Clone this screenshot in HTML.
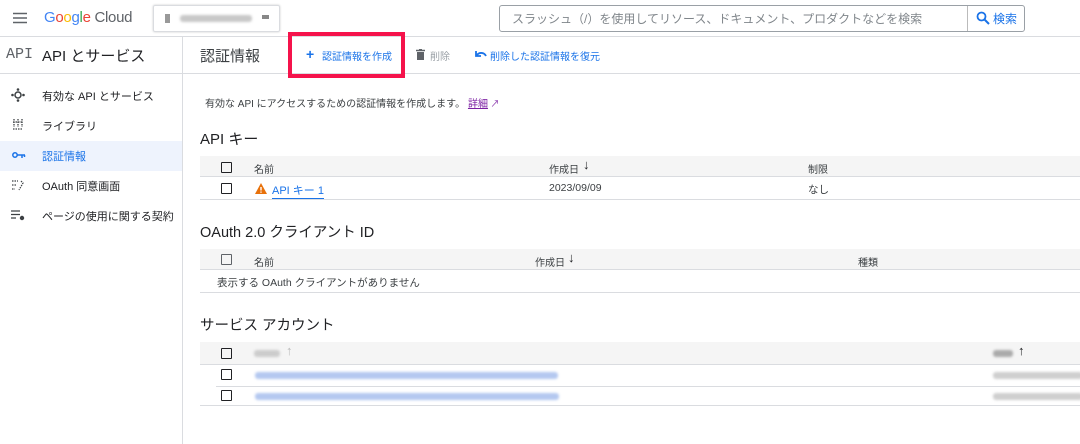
<!DOCTYPE html>
<html><head><meta charset="utf-8"><style>
*{box-sizing:border-box;margin:0;padding:0}
body{width:1080px;height:444px;overflow:hidden;background:#fff;font-family:"Liberation Sans","Noto Sans CJK JP",sans-serif;color:#202124;position:relative}
.a{position:absolute;white-space:nowrap}
.hl{position:absolute;background:#dadce0}
.s{font-size:10px;color:#3c4043}
.blue{color:#1a73e8}
.cb{position:absolute;width:11px;height:11px;border:1.6px solid #202124;border-radius:1px}
.blur{position:absolute;height:7px;border-radius:3px;filter:blur(1.2px)}
</style></head><body>
<!-- top bar -->
<div class="hl" style="left:0;top:36px;width:1080px;height:1px"></div>
<svg class="a" style="left:13px;top:12px" width="14" height="12"><path d="M0 1.5h14M0 6h14M0 10.5h14" stroke="#5f6368" stroke-width="1.6"/></svg>
<div class="a" style="left:44px;top:9px;font-size:15px;letter-spacing:-0.3px"><span style="color:#4285f4">G</span><span style="color:#ea4335">o</span><span style="color:#fbbc04">o</span><span style="color:#4285f4">g</span><span style="color:#34a853">l</span><span style="color:#ea4335">e</span><span style="color:#5f6368"> Cloud</span></div>
<div class="a" style="left:153px;top:5px;width:127px;height:27px;border:1px solid #dadce0;border-radius:2px;box-shadow:0 0 2px #ccc"></div>
<div class="a" style="left:165px;top:14px;width:5px;height:9px;background:#999"></div>
<div class="blur" style="left:180px;top:15px;width:72px;background:#c8c8c8"></div>
<div class="a" style="left:262px;top:15px;width:7px;height:4px;background:#888"></div>
<div class="a" style="left:499px;top:5px;width:526px;height:27px;border:1px solid #9aa0a6;border-radius:3px"></div>
<div class="hl" style="left:967px;top:6px;width:1px;height:25px;background:#bbb"></div>
<div class="a" style="left:512px;top:10px;font-size:12px;color:#80868b">スラッシュ（/）を使用してリソース、ドキュメント、プロダクトなどを検索</div>
<svg class="a" style="left:976px;top:11px" width="14" height="14"><circle cx="5.5" cy="5.5" r="4" fill="none" stroke="#1a73e8" stroke-width="1.8"/><path d="M8.5 8.5l4.5 4.5" stroke="#1a73e8" stroke-width="2"/></svg>
<div class="a blue" style="left:993px;top:10px;font-size:12px">検索</div>
<!-- sidebar -->
<div class="hl" style="left:182px;top:37px;width:1px;height:407px"></div>
<div class="hl" style="left:0;top:73px;width:1080px;height:1px"></div>
<div class="a" style="left:6px;top:46px;font-family:'Liberation Mono',monospace;font-size:15px;color:#5f6368">API</div>
<div class="a" style="left:42px;top:45px;font-size:15px">API とサービス</div>
<div class="a" style="left:0;top:141px;width:182px;height:30px;background:#eef3fd"></div>
<svg class="a" style="left:11px;top:88px" width="14" height="14"><circle cx="7" cy="7" r="3" fill="none" stroke="#3c4043" stroke-width="1.5"/><circle cx="7" cy="1.5" r="1.3" fill="#3c4043"/><circle cx="7" cy="12.5" r="1.3" fill="#3c4043"/><circle cx="1.5" cy="7" r="1.3" fill="#3c4043"/><circle cx="12.5" cy="7" r="1.3" fill="#3c4043"/></svg>
<div class="a s" style="left:42px;top:88px;font-size:11px;color:#202124">有効な API とサービス</div>
<svg class="a" style="left:13px;top:119px" width="10" height="11"><path d="M1 0v8M5 0v8M9 0v8M0 10h10M0 3h10" stroke="#3c4043" stroke-width="1.3" stroke-dasharray="1.5 1"/></svg>
<div class="a" style="left:42px;top:118px;font-size:11px">ライブラリ</div>
<svg class="a" style="left:12px;top:151px" width="14" height="8"><circle cx="3" cy="4" r="2.2" fill="none" stroke="#1a73e8" stroke-width="1.5"/><path d="M5 4h8M10 4v3M12.5 4v2" stroke="#1a73e8" stroke-width="1.5"/></svg>
<div class="a blue" style="left:42px;top:148px;font-size:11px">認証情報</div>
<svg class="a" style="left:12px;top:180px" width="12" height="11"><path d="M0 1h6M0 5h4M0 9h3M9 1l2 2-4 7" stroke="#3c4043" stroke-width="1.2" stroke-dasharray="1.5 1" fill="none"/></svg>
<div class="a" style="left:42px;top:178px;font-size:11px">OAuth 同意画面</div>
<svg class="a" style="left:11px;top:210px" width="14" height="11"><path d="M0 1h9M0 4.5h9M0 8h5" stroke="#3c4043" stroke-width="1.3"/><circle cx="11" cy="8" r="2.2" fill="#3c4043"/></svg>
<div class="a" style="left:42px;top:208px;font-size:11px">ページの使用に関する契約</div>
<!-- action bar -->
<div class="a" style="left:200px;top:45px;font-size:15px;color:#3c4043">認証情報</div>
<div class="a" style="left:288px;top:32px;width:117px;height:46px;border:4px solid #f5134b"></div>
<div class="a blue" style="left:306px;top:46px;font-size:14px;font-weight:bold">+</div>
<div class="a blue" style="left:322px;top:48px;font-size:10px">認証情報を作成</div>
<svg class="a" style="left:416px;top:49px" width="9" height="11"><path d="M0 1.5h9M3 0h3" stroke="#5f6368" stroke-width="1.4"/><rect x="1" y="3" width="7" height="8" fill="#5f6368"/></svg>
<div class="a" style="left:430px;top:48px;font-size:10px;color:#9aa0a6">削除</div>
<svg class="a" style="left:475px;top:50px" width="12" height="8"><path d="M1 1v5h5M1.5 5.5C4 2 9 2 11 6" stroke="#1a73e8" stroke-width="1.8" fill="none"/></svg>
<div class="a blue" style="left:490px;top:48px;font-size:10px">削除した認証情報を復元</div>
<!-- description -->
<div class="a" style="left:205px;top:95px;font-size:10px;color:#3c4043">有効な API にアクセスするための認証情報を作成します。 <span style="color:#7b1fa2;text-decoration:underline">詳細</span><span style="color:#7b1fa2;font-size:9px"> ↗</span></div>
<!-- API keys -->
<div class="a" style="left:200px;top:128px;font-size:15px">API キー</div>
<div class="a" style="left:200px;top:156px;width:880px;height:21px;background:#f5f5f5;border-bottom:1px solid #dadce0"></div>
<div class="cb" style="left:221px;top:162px"></div>
<div class="a s" style="left:254px;top:161px">名前</div>
<div class="a s" style="left:549px;top:161px">作成日</div>
<div class="a" style="left:583px;top:157px;font-size:13px;font-weight:bold">↓</div>
<div class="a s" style="left:808px;top:161px">制限</div>
<div class="hl" style="left:200px;top:199px;width:880px;height:1px"></div>
<div class="cb" style="left:221px;top:183px"></div>
<svg class="a" style="left:255px;top:183px" width="12" height="11"><path d="M6 0L12 11H0z" fill="#e8710a"/><path d="M6 4v3.5M6 8.5v1.3" stroke="#fff" stroke-width="1.4"/></svg>
<div class="a blue" style="left:272px;top:182px;font-size:11px;border-bottom:1px solid #1a73e8">API キー 1</div>
<div class="a s" style="left:549px;top:182px;font-size:10.5px">2023/09/09</div>
<div class="a s" style="left:808px;top:182px;font-size:10.5px">なし</div>
<!-- OAuth -->
<div class="a" style="left:200px;top:221px;font-size:14.5px">OAuth 2.0 クライアント ID</div>
<div class="a" style="left:200px;top:249px;width:880px;height:21px;background:#f5f5f5;border-bottom:1px solid #dadce0"></div>
<div class="cb" style="left:221px;top:254px;border-color:#5f6368;border-width:1.2px"></div>
<div class="a s" style="left:254px;top:254px">名前</div>
<div class="a s" style="left:535px;top:254px">作成日</div>
<div class="a" style="left:568px;top:250px;font-size:13px;font-weight:bold">↓</div>
<div class="a s" style="left:858px;top:254px">種類</div>
<div class="a s" style="left:217px;top:275px;font-size:10.5px">表示する OAuth クライアントがありません</div>
<div class="hl" style="left:200px;top:292px;width:880px;height:1px"></div>
<!-- service accounts -->
<div class="a" style="left:200px;top:314px;font-size:14.5px">サービス アカウント</div>
<div class="a" style="left:200px;top:342px;width:880px;height:23px;background:#f5f5f5;border-bottom:1px solid #dadce0"></div>
<div class="cb" style="left:221px;top:348px"></div>
<div class="blur" style="left:254px;top:350px;width:26px;background:#ccc"></div>
<div class="a" style="left:286px;top:343px;font-size:13px;color:#bbb">↑</div>
<div class="blur" style="left:993px;top:350px;width:20px;background:#aaa"></div>
<div class="a" style="left:1018px;top:343px;font-size:13px;font-weight:bold">↑</div>
<div class="cb" style="left:221px;top:369px"></div>
<div class="blur" style="left:255px;top:372px;width:303px;background:#b4c8f0"></div>
<div class="blur" style="left:993px;top:372px;width:90px;background:#cfcfcf"></div>
<div class="hl" style="left:216px;top:386px;width:864px;height:1px"></div>
<div class="cb" style="left:221px;top:390px"></div>
<div class="blur" style="left:255px;top:393px;width:304px;background:#b4c8f0"></div>
<div class="blur" style="left:993px;top:393px;width:90px;background:#cfcfcf"></div>
<div class="hl" style="left:200px;top:405px;width:880px;height:1px"></div>
</body></html>
